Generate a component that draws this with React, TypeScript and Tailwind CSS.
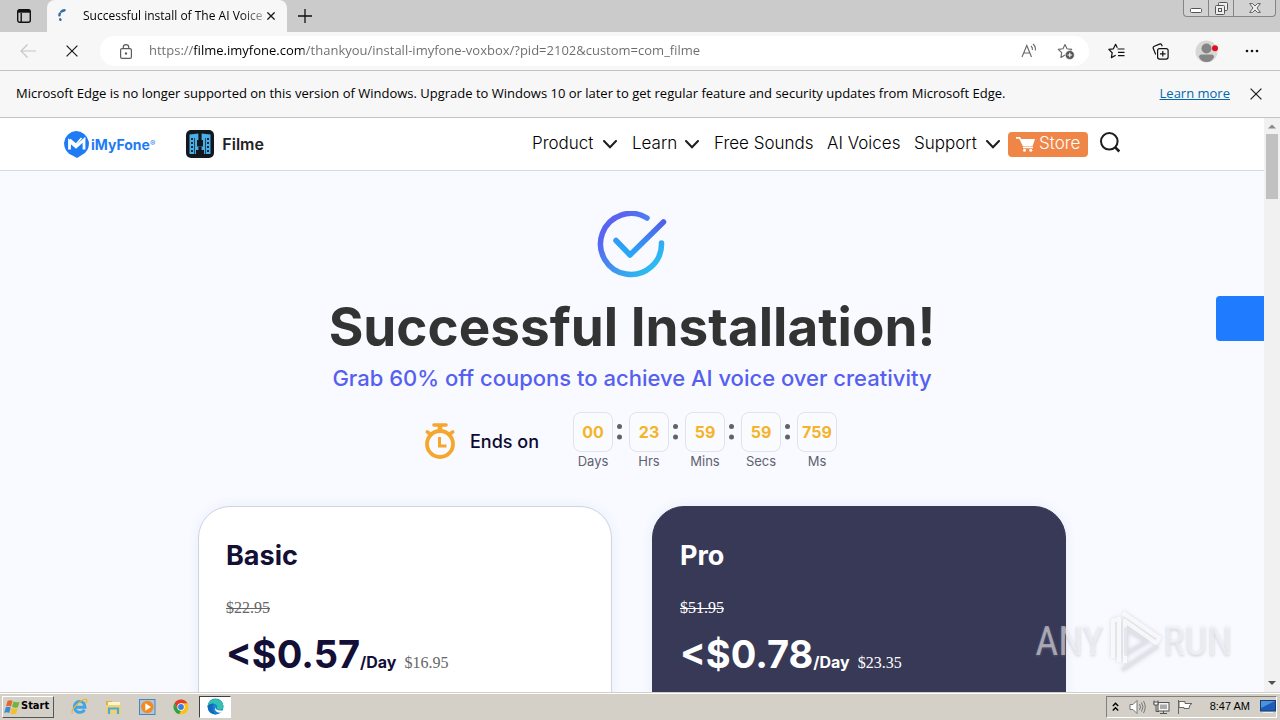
import type { ReactNode } from "react";

const UI = "font-['Open_Sans',sans-serif]";

function TabsIcon() {
  return (
    <svg width="16" height="16" viewBox="0 0 16 16" fill="none" stroke="#111" strokeWidth="1.4">
      <rect x="1.7" y="1.7" width="12.6" height="12.6" rx="2" />
      <path d="M2 3.2h12" strokeWidth="3" />
      <path d="M5.2 5v9" />
    </svg>
  );
}

function Cross({ size, width = 1.2 }: { size: number; width?: number }) {
  return (
    <svg width={size} height={size} viewBox="0 0 12 12" stroke="#1a1a1a" strokeWidth={width} fill="none">
      <path d="M.6.6l10.8 10.8M11.4.6L.6 11.4" />
    </svg>
  );
}

function TitleBar() {
  return (
    <div className="flex h-8 shrink-0 items-stretch bg-[#cbcbcb]">
      <button aria-label="Tab actions" className="flex w-[47px] items-center justify-center">
        <TabsIcon />
      </button>
      <div className="flex w-[240px] items-center rounded-t-lg bg-[#f7f7f7] pr-2 pl-2">
        <svg width="16" height="16" viewBox="0 0 16 16" fill="none" stroke="#2f6da8" strokeWidth="2.4" strokeLinecap="round">
          <path d="M9.5 2.2Q5 3 4.4 7.4" strokeDasharray="3.4 2.6" />
          <path d="M5.2 11.3l.3.5" />
        </svg>
        <span className="ml-3 bg-linear-to-r from-black from-85% to-[#aaa] bg-clip-text text-[12px] whitespace-nowrap text-transparent">
          Successful install of The AI Voice
        </span>
        <button aria-label="Close tab" className="ml-auto p-1">
          <Cross size={8} width={2} />
        </button>
      </div>
      <button aria-label="New tab" className="flex w-9 items-center justify-center">
        <svg width="14" height="14" viewBox="0 0 14 14" stroke="#111" strokeWidth="1.3"><path d="M7 0v14M0 7h14" /></svg>
      </button>
      <div className="flex-1" />
      <div className="mr-1 flex h-[17px] rounded-b border border-t-0 border-[#858585] bg-[#d2d2d2]">
        <button aria-label="Minimize" className="flex w-6 items-center justify-center">
          <svg width="12" height="14" viewBox="0 0 12 14" fill="#fff" stroke="#555"><rect x=".5" y="7.5" width="11" height="4" rx="1" /></svg>
        </button>
        <button aria-label="Restore" className="flex w-[26px] items-center justify-center border-x border-[#858585]">
          <svg width="13" height="13" viewBox="0 0 13 13" fill="#eee" stroke="#555">
            <rect x="3.5" y=".5" width="9" height="8" rx="1" />
            <rect x=".5" y="3.5" width="9" height="9" rx="1" />
            <rect x="3.5" y="6.5" width="3" height="3" />
          </svg>
        </button>
        <button aria-label="Close" className="flex w-[41px] items-center justify-center">
          <svg width="12" height="10" viewBox="0 0 12 10" fill="#eee" stroke="#555" strokeWidth=".9">
            <path d="M.6.6h3L6 3 8.400.6h3L8 5l3.400 4.400h-3L6 7 3.600 9.400h-3L4 5z" />
          </svg>
        </button>
      </div>
    </div>
  );
}

const STAR = "M8 1.500l2 4.300 4.700.6-3.400 3.300.8 4.700L8 12.100l-4.100 2.300.8-4.700L1.300 6.400 6 5.800z";

function Toolbar() {
  return (
    <div className="flex h-[39px] shrink-0 items-center border-b border-[#c3c3c3] bg-[#f7f7f7]">
      <button aria-label="Back" className="ml-5 flex w-4 justify-center">
        <svg width="16" height="14" viewBox="0 0 16 14" stroke="#c6c6c6" fill="none" strokeWidth="1.200"><path d="M16 7H1M7.500.5L1 7l6.500 6.500" /></svg>
      </button>
      <button aria-label="Stop loading" className="ml-[30px] flex w-3 justify-center"><Cross size={12} /></button>
      <div className="ml-[22px] flex h-[30px] flex-1 items-center rounded-full bg-white pr-[14px] pl-5">
        <svg width="12" height="15" viewBox="0 0 12 15" fill="none" stroke="#5c5c5c" strokeWidth="1.200">
          <rect x=".6" y="4.600" width="10.800" height="9.800" rx="1.500" />
          <path d="M3.300 4.600V3a2.700 2.400 0 015.400 0v1.600" />
          <circle cx="6" cy="9.500" r=".6" fill="#5c5c5c" />
        </svg>
        <input
          aria-label="Address"
          defaultValue="https://filme.imyfone.com/thankyou/install-imyfone-voxbox/?pid=2102&custom=com_filme"
          className="ml-[17px] min-w-0 flex-1 bg-[linear-gradient(to_right,#6b6b6b_45px,#000_45px,#000_155px,#6b6b6b_155px)] bg-clip-text text-[13px] text-transparent outline-none"
        />
        <button aria-label="Read aloud">
          <svg width="17" height="16" viewBox="0 0 17 16" fill="none" stroke="#666" strokeWidth="1.100">
            <path d="M1 14L5.800 2.500 10.500 14M2.700 10h6.200M10 3q1.800 1.500 1.400 4M12 1q3 2.500 2.300 6.500" />
          </svg>
        </button>
        <button aria-label="Add to favorites" className="ml-[19px]">
          <svg width="18" height="17" viewBox="0 0 18 17" fill="none" stroke="#666" strokeWidth="1.100" strokeLinejoin="round">
            <path d={STAR} />
            <circle cx="12.800" cy="12" r="4.500" fill="#555" stroke="#fff" strokeWidth=".6" />
            <path d="M12.800 9.700v4.600M10.500 12h4.600" stroke="#fff" />
          </svg>
        </button>
      </div>
      <button aria-label="Favorites" className="ml-[19px]">
        <svg width="17" height="17" viewBox="0 0 17 17" fill="none" stroke="#111" strokeWidth="1.200" strokeLinejoin="round">
          <path d="M9.300 4.800L7.600 1.300 5.400 5.800.8 6.400l3.400 3.300-.8 4.900 4.300-2.300M9.500 6h7M10 9.300h6.500M10 12.600h6.500" />
        </svg>
      </button>
      <button aria-label="Collections" className="ml-[27px]">
        <svg width="17" height="17" viewBox="0 0 17 17" fill="none" stroke="#111" strokeWidth="1.200">
          <rect x="5.600" y="5.600" width="10.500" height="10.500" rx="2" />
          <path d="M10.800 8v5.600M8 10.800h5.600M3.700 11.500L1.300 5.500q-.6-1.600 1-2.300L7.500 1.100q1.500-.6 2.200.8l.6 1.400" />
        </svg>
      </button>
      <button aria-label="Profile" className="ml-[26px]">
        <svg width="23" height="23" viewBox="0 0 23 23">
          <circle cx="11.500" cy="11.500" r="11" fill="#d9d7d5" />
          <circle cx="11.500" cy="8.500" r="5" fill="#858585" />
          <path d="M4 17q0-2.500 2.500-2.500h10q2.500 0 2.500 2.500-2 5-7.500 5T4 17z" fill="#858585" />
          <circle cx="20" cy="8.300" r="3" fill="#e01020" />
        </svg>
      </button>
      <button aria-label="Settings and more" className="mr-[21px] ml-[27px]">
        <svg width="14" height="4" viewBox="0 0 14 4" fill="#111"><circle cx="2" cy="2" r="1.300" /><circle cx="7" cy="2" r="1.300" /><circle cx="12" cy="2" r="1.300" /></svg>
      </button>
    </div>
  );
}

function InfoBar() {
  return (
    <div className="flex h-[47px] shrink-0 items-center border-b border-[#c3c3c3] bg-[#f7f7f7] pr-[18px] pl-4 text-[13px] text-black">
      <p className="whitespace-nowrap">
        Microsoft Edge is no longer supported on this version of Windows. Upgrade to Windows 10 or later to get regular feature and security updates from Microsoft Edge.
      </p>
      <a href="#" className="mr-5 ml-auto whitespace-nowrap text-[#0067b0] underline">Learn more</a>
      <button aria-label="Dismiss"><Cross size={12} /></button>
    </div>
  );
}

function NavLink({ children, menu, width }: { children: ReactNode; menu?: boolean; width: string }) {
  return (
    <a href="#" className={`flex items-center justify-between whitespace-nowrap ${width}`}>
      {children}
      {menu && (
        <svg width="14" height="9" viewBox="0 0 14 9" fill="none" stroke="#1d1d1f" strokeWidth="2" strokeLinecap="round"><path d="M1 1l6 6.300L13 1" /></svg>
      )}
    </a>
  );
}

function SiteHeader() {
  return (
    <header className="flex h-[53px] items-center border-b border-[#d8dae2] bg-white pr-[144px] pl-[63px] text-black">
      <a href="#" className="flex items-center gap-[2px] text-[14px] font-bold text-[#1f7bf4]">
        <svg width="26" height="27" viewBox="0 0 26 27">
          <path d="M13 0a13 12.700 0 015 24.400L14 27l-4-2.200A12.700 12.700 0 0113 0z" fill="#1f7bf4" />
          <path d="M6.500 18.500v-8.300l6.500 5.600 8-7v9.700" fill="none" stroke="#fff" strokeWidth="2.800" />
          <path d="M7 8.300l6 5L18.500 7" fill="none" stroke="#fff" strokeWidth="1.600" />
        </svg>
        <span>iMyFone<sup className="text-[8px] font-normal">®</sup></span>
      </a>
      <a href="#" className="ml-[31px] flex items-center gap-2 text-[16px] font-semibold text-[#222]">
        <svg width="28" height="28" viewBox="0 0 28 28">
          <rect width="28" height="28" rx="5" fill="#14181d" />
          <path d="M3.500 4.500l9-1v6.500h3V3.500l9 1V24H18v-4h-2.500v-3h-3v3H10v4H3.500z" fill="#48b0e8" />
          <rect x="11" y="10" width="6" height="6.500" fill="#14181d" />
          <path d="M14 3v7M14 16.500V21" stroke="#14181d" strokeWidth="2.400" />
          <path d="M6 8v15M22 8v15" stroke="#14181d" strokeWidth="1.800" strokeDasharray="2 2" />
          <path d="M8.500 8v16M19.500 8v16" stroke="#14181d" strokeWidth=".7" />
        </svg>
        Filme
      </a>
      <nav className="ml-auto flex items-center text-[17px] font-light">
        <div className="flex gap-[15px]">
          <NavLink menu width="w-[85px]">Product</NavLink>
          <NavLink menu width="w-[67px]">Learn</NavLink>
          <NavLink width="w-[98px]">Free Sounds</NavLink>
          <NavLink width="w-[72px]">AI Voices</NavLink>
          <NavLink menu width="w-[86px]">Support</NavLink>
        </div>
        <a href="#" className="ml-2 flex h-[25px] w-20 items-center gap-1 rounded bg-[#ef8648] pl-2 text-white">
          <svg width="19" height="15" viewBox="0 0 19 15" fill="#fff">
            <path d="M0 0h4l1.300 2H19l-2.500 7.500H7L3.200 1.700H0zM7 10h10v1.300H7z" />
            <circle cx="8.500" cy="13.300" r="1.500" /><circle cx="14.800" cy="13.300" r="1.500" />
          </svg>
          Store
        </a>
        <button aria-label="Search" className="ml-3 pb-1">
          <svg width="20" height="21" viewBox="0 0 20 21" fill="none" stroke="#1d1d1f" strokeWidth="2"><circle cx="9.300" cy="9.300" r="8.300" /><path d="M15 15.200l4.300 4.300" strokeWidth="2.600" /></svg>
        </button>
      </nav>
    </header>
  );
}

const TIMER = [
  { value: "00", label: "Days" },
  { value: "23", label: "Hrs" },
  { value: "59", label: "Mins" },
  { value: "59", label: "Secs" },
  { value: "759", label: "Ms" },
];

function Countdown() {
  return (
    <div className="mt-5 flex justify-center gap-[34px] pr-[3px]">
      <div className="flex h-[58px] items-center gap-[14px] text-[18px] font-medium text-[#0c0a33]">
        <svg width="32" height="38" viewBox="0 0 32 38" fill="none" stroke="#f5a62c">
          <circle cx="16" cy="22" r="13" strokeWidth="3.800" />
          <path d="M10 3h12" strokeWidth="3.600" strokeLinecap="round" />
          <path d="M16 3v6" strokeWidth="4.500" />
          <path d="M3.300 10l3 2M28.700 10l-3 2" strokeWidth="3.600" strokeLinecap="round" />
          <path d="M15.500 15v9h7" strokeWidth="3" />
        </svg>
        Ends on
      </div>
      <div className="flex gap-4">
        {TIMER.map((unit, i) => (
          <div key={unit.label} className="relative w-10 text-center">
            <div className="flex h-10 items-center justify-center rounded-lg border border-[#e0e2ee] bg-[#fafbff] text-[16px] font-bold text-[#f5b32a]">
              {unit.value}
            </div>
            <div className="text-[13px] leading-[18px] text-[#5f6170]">{unit.label}</div>
            {i < TIMER.length - 1 && (
              <svg className="absolute top-3 left-11" width="5" height="16" viewBox="0 0 5 16" fill="#626262"><circle cx="2.500" cy="2.500" r="2.500" /><circle cx="2.500" cy="13" r="2.500" /></svg>
            )}
          </div>
        ))}
      </div>
    </div>
  );
}

function PlanCard({ name, was, daily, price, tone, muted }: { name: string; was: string; daily: string; price: string; tone: string; muted: string }) {
  return (
    <section className={`h-[520px] w-[414px] rounded-[32px] border px-[27px] pt-[30px] ${tone}`}>
      <h3 className="text-[27px] leading-[38px] font-bold">{name}</h3>
      <p className={`mt-[23px] font-['Liberation_Serif',serif] text-[16px] leading-[20px] line-through ${muted}`}>{was}</p>
      <p className="mt-[11px] flex items-baseline leading-[50px] font-bold">
        <span className="text-[38px]">&lt;${daily}</span>
        <span className="text-[16px]">/Day</span>
        <span className={`ml-2 font-['Liberation_Serif',serif] text-[16px] font-normal ${muted}`}>{price}</span>
      </p>
    </section>
  );
}

function Watermark() {
  return (
    <div className="pointer-events-none absolute right-12 bottom-4 flex items-center font-['Liberation_Sans_Narrow','Roboto_Condensed',Roboto,sans-serif] text-[40px] leading-[68px] text-white/50 [text-shadow:0_1px_3px_#8a8c9c66]">
      <span>ANY</span>
      <svg width="60" height="64" viewBox="0 0 60 64" fill="none" stroke="#fff" strokeOpacity=".75" strokeWidth="4" strokeLinejoin="round" className="drop-shadow-[0_0_2px_#8a8c9c66]">
        <path d="M9 48V11l6-2v43M19 3l36 25-3 5L21 11v42" />
        <path d="M22 19v25l21-12.500zM18 60l36-24" stroke="#dfe1e8" />
      </svg>
      <span>RUN</span>
    </div>
  );
}

function Scrollbar() {
  return (
    <div className="flex w-4 shrink-0 flex-col items-center bg-[#f1f1f1]">
      <svg width="8" height="16" viewBox="0 0 8 16" fill="#8b8b8b"><path d="M0 10.500l4-4 4 4z" /></svg>
      <div className="h-[65px] w-3 bg-[#c1c1c1]" />
      <svg className="mt-auto" width="8" height="18" viewBox="0 0 8 18" fill="#505050"><path d="M0 7h8l-4 4z" /></svg>
    </div>
  );
}

function Taskbar() {
  return (
    <footer className="flex h-7 shrink-0 items-center border-t border-[#d4d0c8] bg-[#d4d0c8] text-black shadow-[inset_0_1px_0_#fff]">
      <button className="ml-[2px] flex h-[22px] w-[52px] items-center border border-t-white border-r-[#555] border-b-[#555] border-l-white pl-px font-['DejaVu_Sans_Condensed','DejaVu_Sans',sans-serif] text-[11px] font-bold">
        <svg width="17" height="16" viewBox="0 0 17 16">
          <path d="M3.500 2Q6 .5 8.500 2L7 7.500Q4.500 6 2 7.500z" fill="#e9652b" />
          <path d="M9.500 2.500q3 1.500 6 .2L14 8.300q-3 1-6-.5z" fill="#6fb53b" />
          <path d="M1.700 8.500q2.500-1.500 5 0L5.200 14Q3 12.500.2 14z" fill="#3b8ad6" />
          <path d="M7.700 9q3 1.500 6 .2l-1.500 5.400q-3 1.200-6-.3z" fill="#f3bf2d" />
        </svg>
        Start
      </button>
      <div className="ml-[17px] flex items-center gap-[17px]">
        <button aria-label="Internet Explorer">
          <svg width="17" height="17" viewBox="0 0 17 17" fill="none">
            <path d="M13.500 11.800A5.500 5.500 0 118.500 3.400q5.200.3 5.500 5.900H4" stroke="#3fa5e4" strokeWidth="2.900" />
            <path d="M1.500 15.500Q-.5 13 5 7.500 13-.3 15.500 1.500q1 1-.8 3.800" stroke="#e8b634" strokeWidth="1.200" />
          </svg>
        </button>
        <button aria-label="File Explorer">
          <svg width="17" height="16" viewBox="0 0 17 16">
            <path d="M1 2h6l1 2h7v10H1z" fill="#d9b24c" /><path d="M3 3h12v6H3z" fill="#fff5c5" />
            <path d="M1 6h15v9H1z" fill="#ecd374" /><path d="M4 15V9.500h9V15" fill="none" stroke="#4fa9dc" strokeWidth="2.200" />
          </svg>
        </button>
        <button aria-label="Media Player">
          <svg width="17" height="16" viewBox="0 0 17 16">
            <rect x=".5" y=".5" width="15.500" height="15" fill="#a7c9e8" stroke="#5083b2" />
            <circle cx="8.300" cy="8" r="6.200" fill="#f48a1e" /><path d="M6.300 4.300v7.400L12 8z" fill="#fff" />
          </svg>
        </button>
        <button aria-label="Chrome">
          <svg width="16" height="16" viewBox="0 0 16 16">
            <circle cx="8" cy="8" r="7.500" fill="#fbc116" />
            <path d="M1.500 4.200A7.500 7.500 0 0114.500 4.300H8L4.800 10z" fill="#e33b2e" />
            <path d="M1.500 4.200L5 10l3 1.800-2 3.400A7.500 7.500 0 011.500 4.200z" fill="#2da24c" />
            <circle cx="8" cy="8" r="3.700" fill="#fff" /><circle cx="8" cy="8" r="2.900" fill="#3c7de0" />
          </svg>
        </button>
      </div>
      <button aria-label="Microsoft Edge" className="ml-[10px] flex h-[22px] w-8 items-center justify-center border border-t-[#404040] border-r-white border-b-white border-l-[#404040] bg-white">
        <svg width="17" height="17" viewBox="0 0 17 17">
          <circle cx="8.500" cy="8.500" r="8" fill="#1583d6" />
          <path d="M.6 8A8 8 0 0116.500 8q0 3.700-4 3.700-3.500 0-2.500-1.700 1-3.500-3-4.300Q3 5.500.6 8z" fill="#35c1b0" />
          <path d="M.6 8Q3 4.800 7 5.700 5 7.500 5.500 11q.7 3.500 4 5.400Q1 16.500.6 8z" fill="#1668b8" />
          <path d="M8.500 8.500q-1 4.700 7.500 4-1 1.500-2.500 2.300-5-.3-5.500-3.500z" fill="#fff" />
        </svg>
      </button>
      <div className="mr-[3px] ml-auto flex h-[22px] items-center border border-t-[#808080] border-r-white border-b-white border-l-[#808080] pl-[5px] font-['Liberation_Sans',sans-serif] text-[11px]">
        <svg width="7" height="10" viewBox="0 0 7 10" fill="none" stroke="#000" strokeWidth="1.400"><path d="M.8 4l2.700-2.700L6.200 4M.8 8.500l2.700-2.700 2.700 2.700" /></svg>
        <svg className="ml-[10px]" width="17" height="16" viewBox="0 0 17 16" fill="#fff" stroke="#777">
          <path d="M1 5.500h3l4-4v13l-4-4H1z" /><path d="M10.500 5q2 3 0 6M12.500 3.500q3 4.500 0 9M14.500 2q3.500 6 0 12" fill="none" />
        </svg>
        <svg className="ml-[7px]" width="17" height="16" viewBox="0 0 17 16" fill="#f5f5f5" stroke="#555">
          <rect x="5" y="3.500" width="11" height="8.500" /><rect x="7" y="5.500" width="7" height="4.500" fill="#aaa" stroke="none" />
          <path d="M7 14.500h7M10.500 12v2.500M1 1.500v4h4v-4M3 5.500v7h3" fill="none" /><path d="M1 3h4v3H1z" />
        </svg>
        <svg className="ml-[7px]" width="17" height="16" viewBox="0 0 17 16" fill="#fff" stroke="#666"><path d="M1.500 1v14M2 2.500h6v2h7q-3 1-3 5H7v-1H2z" /></svg>
        <time className="ml-4 whitespace-nowrap">8:47 AM</time>
        <svg className="ml-[10px]" width="16" height="13" viewBox="0 0 16 13"><rect x=".5" y=".5" width="15" height="10.500" fill="#1b5cb8" stroke="#1b3c72" /><path d="M1 1h14L1 8z" fill="#4a93df" /><path d="M3 12.500h10" stroke="#eee" /></svg>
      </div>
    </footer>
  );
}

export default function App() {
  return (
    <div className={`flex h-screen flex-col overflow-hidden ${UI}`}>
      <TitleBar />
      <Toolbar />
      <InfoBar />
      <div className="relative flex min-h-0 flex-1">
        <div className="min-w-0 flex-1 overflow-hidden bg-[#f8faff] font-['Inter',sans-serif]">
          <SiteHeader />
          <main className="pt-10">
            <svg className="mx-auto" width="70" height="68" viewBox="0 0 70 68" fill="none" strokeWidth="5.500" strokeLinecap="round" strokeLinejoin="round">
              <defs>
                <linearGradient id="ring" x1="0" y1="0" x2="1" y2="1"><stop offset=".2" stopColor="#5a63f2" /><stop offset="1" stopColor="#22cdf0" /></linearGradient>
                <linearGradient id="tick" x1="1" y1="0" x2=".3" y2="1"><stop stopColor="#535fe8" /><stop offset="1" stopColor="#28a8f8" /></linearGradient>
              </defs>
              <path d="M50 7A30.500 30.500 0 1064.500 32" stroke="url(#ring)" />
              <path d="M19 29.500l14 14.500L66.500 11" stroke="url(#tick)" />
            </svg>
            <h1 className="mt-[11px] text-center text-[53px] leading-[75px] font-bold text-[#333]">Successful Installation!</h1>
            <h2 className="mt-[-1px] text-center text-[22px] leading-[28px] font-medium text-[#5560f0]">Grab 60% off coupons to achieve AI voice over creativity</h2>
            <Countdown />
            <div className="mt-9 flex justify-center gap-10">
              <PlanCard name="Basic" was="$22.95" daily="0.57" price="$16.95" tone="border-[#cfd3e6] bg-white text-[#130f36] shadow-[0_0_12px_#e8edfb]" muted="text-[#666]" />
              <PlanCard name="Pro" was="$51.95" daily="0.78" price="$23.35" tone="border-[#383956] bg-[#383956] text-white shadow-[0_0_12px_#e8edfb]" muted="text-white" />
            </div>
          </main>
        </div>
        <button aria-label="Help" className="absolute top-[178px] right-4 h-[45px] w-12 rounded-l bg-[#1f7bff]" />
        <Scrollbar />
        <Watermark />
      </div>
      <Taskbar />
    </div>
  );
}
